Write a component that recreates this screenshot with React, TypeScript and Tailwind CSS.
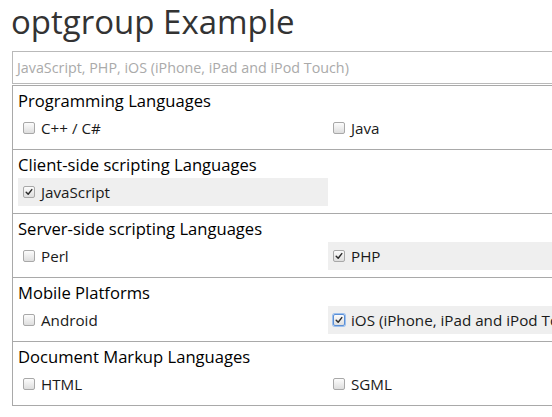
import React from "react";

type Opt = { label: string; checked?: boolean; focus?: boolean };
type Group = { title: string; options: Opt[] };

const groups: Group[] = [
  { title: "Programming Languages", options: [{ label: "C++ / C#" }, { label: "Java" }] },
  { title: "Client-side scripting Languages", options: [{ label: "JavaScript", checked: true }] },
  { title: "Server-side scripting Languages", options: [{ label: "Perl" }, { label: "PHP", checked: true }] },
  { title: "Mobile Platforms", options: [{ label: "Android" }, { label: "iOS (iPhone, iPad and iPod Touch)", checked: true, focus: true }] },
  { title: "Document Markup Languages", options: [{ label: "HTML" }, { label: "SGML" }] },
];

function Box({ checked, focus }: { checked?: boolean; focus?: boolean }) {
  return (
    <span
      className={
        "relative inline-flex h-[12px] w-[12px] shrink-0 items-center justify-center rounded-[2px] border bg-gradient-to-b from-[#fcfcfc] to-[#dedede] " +
        (focus ? "border-[#5b8fd6] ring-1 ring-[#9cc0ee]" : "border-[#a8a8a8]")
      }
    >
      {checked && (
        <svg viewBox="0 0 10 10" className="h-[8px] w-[8px]">
          <path d="M1.5 5.2 L4 7.8 L8.5 2" fill="none" stroke="#2a2a2a" strokeWidth="1.8" strokeLinecap="round" strokeLinejoin="round" />
        </svg>
      )}
    </span>
  );
}

export default function App() {
  return (
    <div className="h-[417px] w-[552px] overflow-hidden bg-white" style={{ fontFamily: '"Open Sans", sans-serif' }}>
      <div className="w-[660px] pl-[12px]">
        <h1 className="h-[51px] text-[33px] leading-[44px] font-normal text-[#333] -ml-[1px]">optgroup Example</h1>
        <div className="flex h-[33px] items-center border border-[#b9b9b9] pl-[4px] text-[14.3px] text-[#aaa]">
          JavaScript, PHP, iOS (iPhone, iPad and iPod Touch)
        </div>
        <div className="mt-[1px] border border-[#a9a9a9] px-[5px]">
          {groups.map((g, i) => (
            <div key={i} className={"pb-[7px] pt-[2px] " + (i > 0 ? "-mx-[5px] border-t border-[#a9a9a9] px-[5px]" : "")}>
              <div className="h-[26px] text-[16.6px] leading-[26px] text-[#000]">{g.title}</div>
              <div className="grid grid-cols-[310px_310px]">
                {g.options.map((o, j) => (
                  <div
                    key={j}
                    className={"flex h-[28px] items-center gap-[6px] pl-[5px] text-[15.2px] text-[#1a1a1a] " + (o.checked ? "bg-[#efefef]" : "")}
                  >
                    <Box checked={o.checked} focus={o.focus} />
                    <span className="whitespace-nowrap">{o.label}</span>
                  </div>
                ))}
              </div>
            </div>
          ))}
        </div>
      </div>
    </div>
  );
}
